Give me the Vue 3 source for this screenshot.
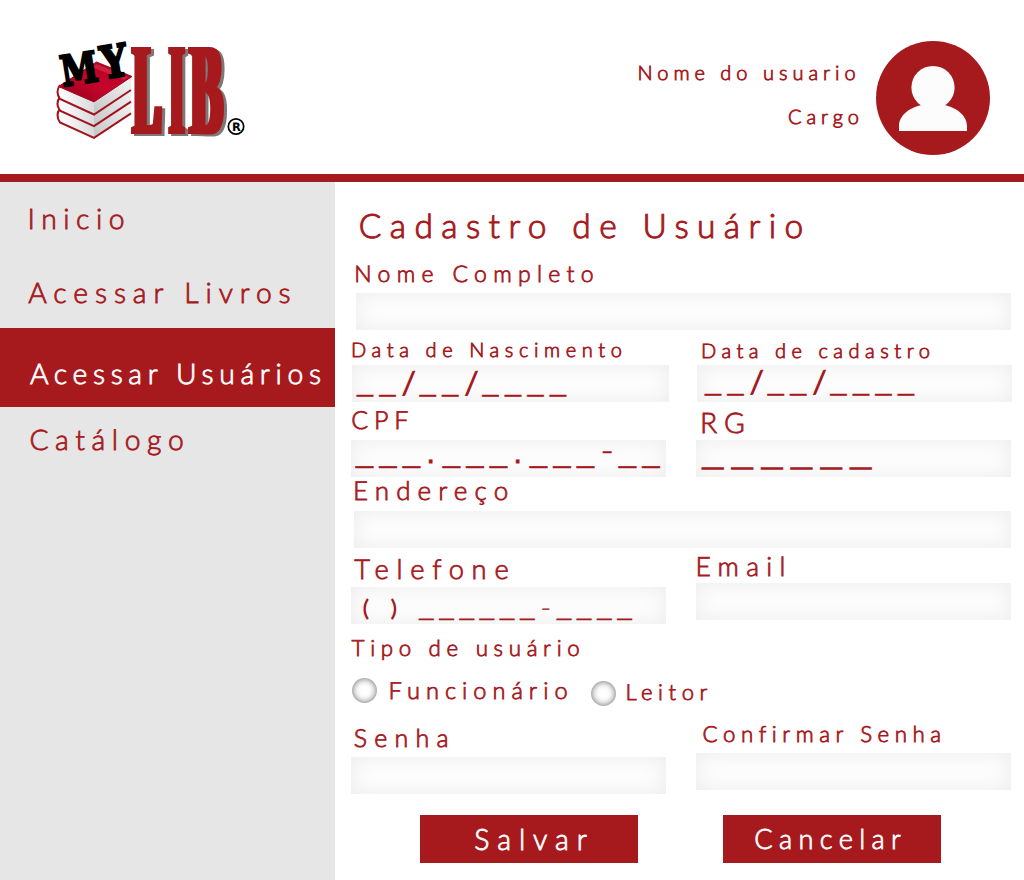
<script setup>
const menu = [
  { text: 'Inicio', cls: 'inicio' },
  { text: 'Acessar Livros', cls: 'livros' },
  { text: 'Acessar Usuários', cls: 'usuarios', active: true },
  { text: 'Catálogo', cls: 'catalogo' },
]

const kinds = { '_': 'bar', '/': 'slash', '.': 'dot', '-': 'dash' }
const cells = (mask) => [...mask].map((char) => ({ char, kind: kinds[char] }))
const dateMask = cells('__/__/____')
const cpfMask = cells('___.___.___-__')
const rgMask = cells('______')
const phoneMask = cells('______-____')
</script>

<template>
  <div class="page">
    <header class="header">
      <svg class="logo" viewBox="0 0 200 110" role="img" aria-label="MY LIB">
        <defs>
          <linearGradient id="cover" x1="0" y1="1" x2="1" y2="0">
            <stop offset="0" stop-color="#8e0018" />
            <stop offset="0.5" stop-color="#c8052c" />
            <stop offset="1" stop-color="#a80020" />
          </linearGradient>
          <linearGradient id="leafLeft" x1="0" y1="0" x2="1" y2="0">
            <stop offset="0" stop-color="#ffffff" />
            <stop offset="1" stop-color="#d9dadb" />
          </linearGradient>
          <linearGradient id="leafRight" x1="0" y1="1" x2="1" y2="0">
            <stop offset="0" stop-color="#c4c6c8" />
            <stop offset="1" stop-color="#f3f3f3" />
          </linearGradient>
          <filter id="slab" x="-10%" y="-10%" width="125%" height="130%" color-interpolation-filters="sRGB">
            <feMorphology operator="dilate" radius="3 1" result="fat" />
            <feOffset in="fat" dx="2.5" dy="1.5" result="moved" />
            <feColorMatrix in="moved" type="matrix" values="0 0 0 0 .5  0 0 0 0 .47  0 0 0 0 .47  0 0 0 1 0" result="shade" />
            <feMerge><feMergeNode in="shade" /><feMergeNode in="fat" /></feMerge>
          </filter>
        </defs>
        <g v-for="n in 3" :key="n" :transform="`translate(0 ${(3 - n) * 11.7})`">
          <path d="M10 52 L44 68 V79 L10 64 Q6 58 10 52Z" fill="url(#leafLeft)" />
          <path d="M44 68 L81 43 V54 L44 79Z" fill="url(#leafRight)" />
          <path d="M10 50 Q5 57 10 64 L44 79.5 L81 55" fill="none" stroke="#a3121f" stroke-width="2" />
        </g>
        <path d="M8.500 51.500 L46.500 27 L82 41.500 L44 67Z" fill="url(#cover)" stroke="#a00c20" stroke-width="1" />
        <path d="M46.500 29 L79 42 L74 45 L42 32Z" fill="#d93552" opacity=".6" />
        <g filter="url(#slab)">
          <text class="lib" transform="translate(83.2 97.8) scale(.32 1)">L</text>
          <text class="lib" transform="translate(120 97.8) scale(.265 1)">I</text>
          <text class="lib" transform="translate(140.2 97.8) scale(.37 1)">B</text>
        </g>
        <text class="my" transform="translate(13 51.500) rotate(-9) scale(.8 1)">M</text>
        <text class="my" transform="translate(53.500 44) rotate(-9) scale(.88 1.06)">Y</text>
        <circle cx="186" cy="91.500" r="7.700" fill="#fff" stroke="#000" stroke-width="1.700" />
        <text class="reg" x="182" y="95.800">R</text>
      </svg>
      <div class="account">
        <span class="t account-name">Nome do usuario</span>
        <span class="t account-role">Cargo</span>
      </div>
      <svg class="avatar" viewBox="0 0 114 114" aria-hidden="true">
        <circle cx="57" cy="57" r="57" fill="#a61a1e" />
        <circle cx="57" cy="46.500" r="21.600" fill="#fcfcfc" />
        <path d="M23 90 V85 C23 75 33 66.500 46 64 L57 60 L68 64 C81 66.500 91 75 91 85 V90Z" fill="#fcfcfc" />
      </svg>
    </header>

    <div class="body">
      <nav class="sidebar">
        <a v-for="item in menu" :key="item.cls" class="item" :class="[item.cls, { active: item.active }]"><span class="t">{{ item.text }}</span></a>
      </nav>

      <main class="form">
        <h1 class="t title">Cadastro de Usuário</h1>

        <section class="group nome">
          <div class="head"><label class="t">Nome Completo</label></div>
          <div class="field"></div>
        </section>

        <div class="row">
          <section class="group nascimento">
            <div class="head"><label class="t">Data de Nascimento</label></div>
            <div class="field date"><span v-for="(c, i) in dateMask" :key="i" :class="c.kind">{{ c.char }}</span></div>
          </section>
          <section class="group cadastro">
            <div class="head"><label class="t">Data de cadastro</label></div>
            <div class="field date"><span v-for="(c, i) in dateMask" :key="i" :class="c.kind">{{ c.char }}</span></div>
          </section>
        </div>

        <div class="row">
          <section class="group cpf">
            <div class="head"><label class="t">CPF</label></div>
            <div class="field"><span v-for="(c, i) in cpfMask" :key="i" :class="c.kind">{{ c.char }}</span></div>
          </section>
          <section class="group rg">
            <div class="head"><label class="t">RG</label></div>
            <div class="field"><span v-for="(c, i) in rgMask" :key="i" :class="c.kind">{{ c.char }}</span></div>
          </section>
        </div>

        <section class="group endereco">
          <div class="head"><label class="t">Endereço</label></div>
          <div class="field"></div>
        </section>

        <div class="row">
          <section class="group telefone">
            <div class="head"><label class="t">Telefone</label></div>
            <div class="field"><span class="paren">(</span><span class="paren">)</span><span v-for="(c, i) in phoneMask" :key="i" :class="c.kind">{{ c.char }}</span></div>
          </section>
          <section class="group email">
            <div class="head"><label class="t">Email</label></div>
            <div class="field"></div>
          </section>
        </div>

        <section class="kind-picker">
          <div class="tipo"><span class="t">Tipo de usuário</span></div>
          <div class="options">
            <label class="option funcionario"><i class="radio"></i><span class="t">Funcionário</span></label>
            <label class="option leitor"><i class="radio"></i><span class="t">Leitor</span></label>
          </div>
        </section>

        <div class="row passwords">
          <section class="group senha">
            <div class="head"><label class="t">Senha</label></div>
            <div class="field"></div>
          </section>
          <section class="group confirmar">
            <div class="head"><label class="t">Confirmar Senha</label></div>
            <div class="field"></div>
          </section>
        </div>

        <div class="actions">
          <button class="salvar" type="button"><span class="t">Salvar</span></button>
          <button class="cancelar" type="button"><span class="t">Cancelar</span></button>
        </div>
      </main>
    </div>
  </div>
</template>

<style>
body { background: #fff; }
</style>

<style scoped>
.page {
  width: 1024px;
  height: 880px;
  overflow: hidden;
  display: flex;
  flex-direction: column;
  background: #fff;
  color: #a61a1e;
  font-family: Lato, sans-serif;
  font-weight: 300;
  text-rendering: geometricPrecision;
}
.t {
  display: block;
  line-height: 1;
  white-space: nowrap;
  font-weight: 300;
  -webkit-text-stroke: 0.8px currentColor;
}

/* header */
.header {
  box-sizing: border-box;
  height: 182px;
  flex: none;
  display: flex;
  border-bottom: 8px solid #a61a1e;
}
.logo { width: 200px; height: 110px; margin: 35px 0 0 50px; overflow: visible; }
.lib { font: bold 130px "Liberation Serif", serif; fill: #a61a1e; }
.my { font: bold 42px "DejaVu Serif", serif; fill: #000; stroke: #000; stroke-width: 2.4px; }
.reg { font: bold 11.5px "DejaVu Sans", sans-serif; fill: #000; }
.account { width: 248px; margin: 63px 0 0 387px; }
.account-name { margin-left: 0.5px; font-size: 20px; letter-spacing: 4.99px; }
.account-role { font-size: 20px; letter-spacing: 4.95px; margin: 24px 0 0 151px; }
.avatar { width: 114px; height: 114px; margin: 41px 0 0 -9px; flex: none; }

.body { flex: 1; display: flex; min-height: 0; }

/* sidebar */
.sidebar { width: 335px; flex: none; background: #e6e6e6; }
.item { display: block; box-sizing: border-box; }
.item .t { font-size: 28.3px; }
.inicio { height: 73px; padding: 23px 0 0 27.6px; }
.inicio .t { letter-spacing: 6.5px; }
.livros { height: 73px; padding: 24px 0 0 28.3px; }
.livros .t { letter-spacing: 6.9px; }
.usuarios { height: 79px; padding: 32px 0 0 30px; }
.usuarios .t { letter-spacing: 5.66px; }
.catalogo { height: 73px; padding: 19px 0 0 29.4px; }
.catalogo .t { letter-spacing: 6.6px; }
.active { background: #a61a1e; color: #fff; }

/* form */
.form { flex: 1; }
.title { margin: 0; padding: 28px 0 0 23.8px; height: 44px; font-size: 33.5px; letter-spacing: 8.4px; -webkit-text-stroke-width: 1px; }
.row { display: flex; }
.row > .group:first-child { width: 345px; box-sizing: border-box; }
.group { padding-left: 16px; }
.head { display: flow-root; }
.field {
  box-sizing: border-box;
  width: 315px;
  height: 37px;
  display: flex;
  align-items: flex-start;
  background: #fdfdfd;
  box-shadow: inset 0 0 22px rgba(0, 0, 0, 0.07);
  line-height: 37px;
}
.field span { flex: none; white-space: nowrap; }
.bar, .dot { font-family: "Liberation Sans", sans-serif; font-weight: 400; }

.nome { padding-left: 21px; }
.nome .head { height: 39px; }
.nome .t { margin: 8px 0 0 -1.7px; font-size: 23px; letter-spacing: 6.3px; }
.nome .field { width: 655px; }

.nascimento { padding-left: 17px; }
.nascimento .head, .cadastro .head { height: 35px; }
.nascimento .t { margin: 10px 0 0 -1px; font-size: 20px; letter-spacing: 5.61px; }
.nascimento .field { width: 317px; padding-left: 5px; }
.cadastro { padding-left: 17px; }
.cadastro .t { margin: 11px 0 0 4px; font-size: 20px; letter-spacing: 5.51px; }
.cadastro .field { padding-left: 8px; }
.date .bar { width: 22.5px; font-size: 28.8px; line-height: 34px; -webkit-text-stroke: 0.3px currentColor; }
.date .slash { width: 17.8px; font-size: 31px; line-height: 34px; -webkit-text-stroke: 1.5px currentColor; }
.cadastro .bar { line-height: 33px; }
.cadastro .slash { line-height: 32px; }

.cpf .head, .rg .head { height: 38px; }
.cpf .t { margin: 6px 0 0 0.3px; font-size: 25px; letter-spacing: 5.8px; }
.cpf .field { padding-left: 5px; }
.cpf .bar { width: 23.5px; font-size: 30.6px; line-height: 24px; -webkit-text-stroke: 0.5px currentColor; }
.cpf .dot { width: 16.5px; font-size: 30px; line-height: 28px; -webkit-text-stroke: 0.8px currentColor; }
.cpf .dash { width: 18.5px; font-size: 36px; line-height: 18px; -webkit-text-stroke: 0.5px currentColor; }
.rg .t { margin: 7px 0 0 4px; font-size: 28.3px; letter-spacing: 6.8px; }
.rg .field { padding-left: 6px; }
.rg .bar { width: 29.6px; font-size: 38.7px; line-height: 19px; }

.endereco { padding-left: 19px; }
.endereco .head { height: 34px; }
.endereco .t { margin: 0 0 0 -1px; font-size: 26px; letter-spacing: 7.12px; }
.endereco .field { width: 657px; }

.telefone .head { height: 39px; }
.telefone .t { margin: 7px 0 0 3.3px; font-size: 27.3px; letter-spacing: 7.75px; }
.telefone .field { padding-left: 12px; }
.telefone .paren { font-size: 22px; width: 28px; line-height: 42px; -webkit-text-stroke: 1.3px currentColor; }
.telefone .bar { width: 20.2px; font-size: 26.4px; line-height: 39px; }
.telefone .dash { width: 16.5px; font-size: 30px; line-height: 40px; -webkit-text-stroke: 0.2px currentColor; }
.email .head { height: 35px; }
.email .t { margin: 5px 0 0 -0.6px; font-size: 26.5px; letter-spacing: 7.3px; }

.kind-picker { height: 91px; padding-left: 16px; }
.tipo { height: 54px; display: flow-root; }
.tipo .t { margin: 13px 0 0 0.6px; font-size: 22.3px; letter-spacing: 5.68px; }
.options { display: flex; }
.option { display: flex; width: 239px; }
.radio {
  width: 25px;
  height: 25px;
  margin-left: 1px;
  border-radius: 50%;
  background: #fff;
  box-shadow: inset 0 0 7px rgba(0, 0, 0, 0.6);
}
.funcionario .t { margin: 2px 0 0 11.6px; font-size: 23.6px; letter-spacing: 6px; }
.leitor { padding-top: 3px; }
.leitor .t { margin: 0 0 0 9.4px; font-size: 22px; letter-spacing: 5.6px; }

.senha .head { height: 42px; }
.senha .t { margin: 11px 0 0 2.8px; font-size: 25px; letter-spacing: 7.2px; }
.confirmar .head { height: 38px; }
.confirmar .t { margin: 8px 0 0 6.6px; font-size: 22.3px; letter-spacing: 5.55px; }

.actions { display: flex; gap: 85px; padding: 21px 0 0 85px; }
.actions button {
  width: 218px;
  height: 48px;
  border: 0;
  padding: 0;
  background: #a61a1e;
  color: #fff;
  font-family: inherit;
  display: flex;
  align-items: flex-start;
}
.salvar .t { margin: 10px 0 0 54.3px; font-size: 28.5px; letter-spacing: 7.9px; }
.cancelar .t { margin: 10px 0 0 31.3px; font-size: 27.2px; letter-spacing: 6.34px; }
</style>
